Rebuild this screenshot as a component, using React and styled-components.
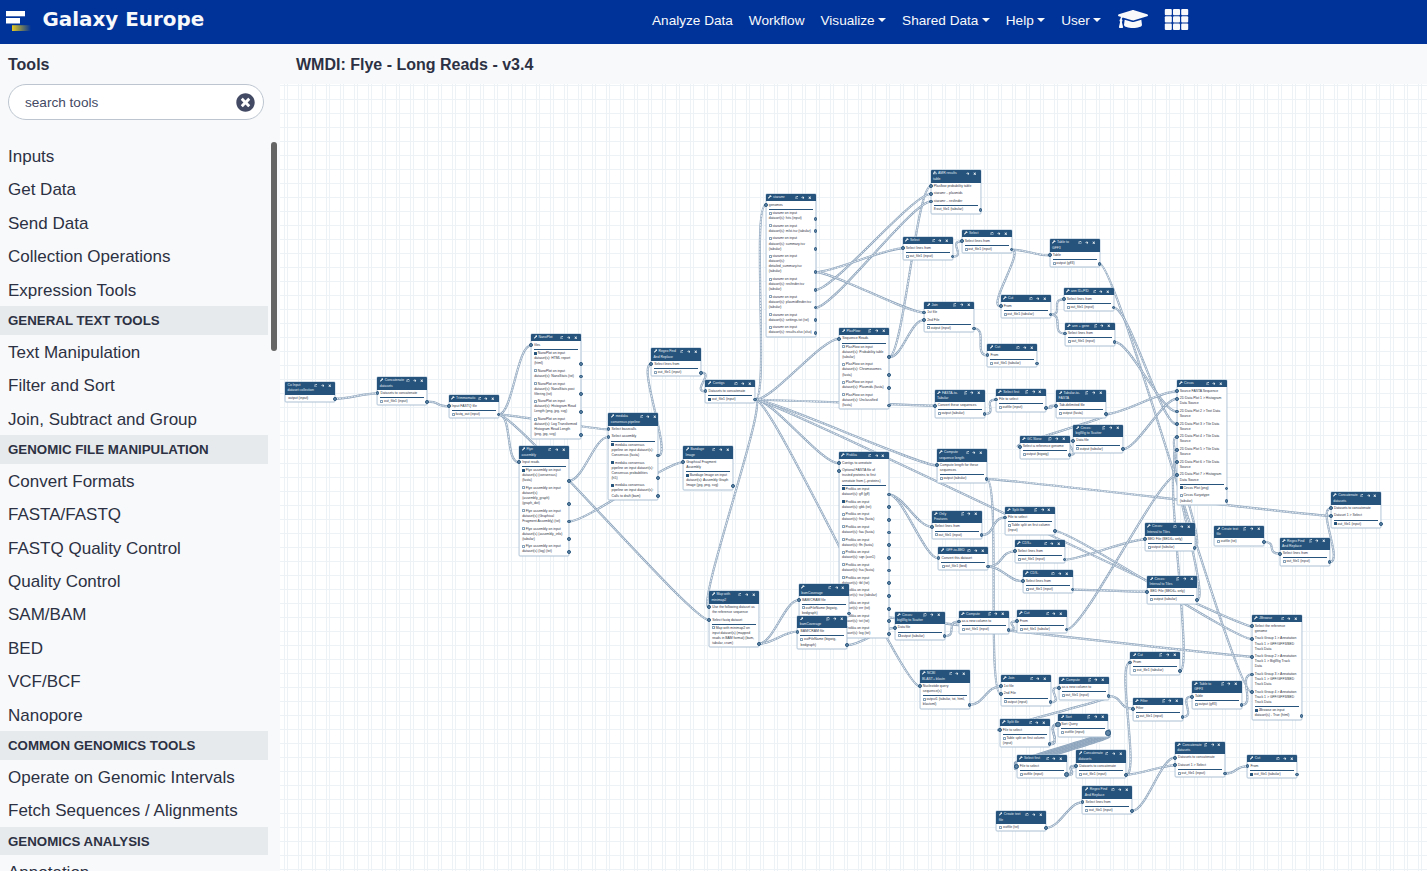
import React from "react";
import styled, { createGlobalStyle, css } from "styled-components";
import {
  FaWrench,
  FaSitemap,
  FaRegCopy,
  FaArrowRight,
  FaTimes,
  FaTimesCircle,
  FaGraduationCap,
} from "react-icons/fa";

const Global = createGlobalStyle`
  * { box-sizing: border-box; }
  body { margin: 0; font-family: "Liberation Sans", Arial, sans-serif; color: #2c3143; background: #f8f9fa; }
`;

const Page = styled.div`
  display: flex;
  flex-direction: column;
  width: 1427px;
  height: 871px;
  overflow: hidden;
  background: #f8f9fb;
`;

/* ---------- masthead ---------- */
const Masthead = styled.header`
  display: flex;
  flex: 0 0 44px;
  background: #003399;
  color: #f8f9fb;
`;
const Brand = styled.div`
  display: flex;
  width: 644px;
  height: 42px;
  align-items: center;
  padding-left: 5px;
  gap: 10.5px;
`;
const BrandName = styled.span`
  margin-top: -2px;
  font: bold 19.9px/24px "DejaVu Sans", Verdana, sans-serif;
`;
const Nav = styled.nav`
  display: flex;
  height: 40px;
  align-items: center;
`;
const NavItem = styled.a`
  display: flex;
  align-items: center;
  padding: 0 8px;
  font-size: 13.6px;
  white-space: nowrap;
`;
const NavIcon = styled(NavItem)`
  height: 38.5px;
  margin-left: 0.6px;
  align-self: flex-start;
`;
const Caret = styled.i`
  margin-left: 3.4px;
  border: 4px solid transparent;
  border-top-color: currentColor;
  border-bottom: 0;
`;

/* ---------- tool panel ---------- */
const Body = styled.div`
  display: flex;
  flex: 1;
  min-height: 0;
`;
const Side = styled.aside`
  display: flex;
  flex-direction: column;
  width: 280px;
`;
const SideTitle = styled.h2`
  height: 40px;
  margin: 0;
  padding: 0 8px;
  font-size: 16px;
  line-height: 42px;
`;
const Search = styled.div`
  display: flex;
  align-items: center;
  justify-content: space-between;
  width: 256px;
  height: 36px;
  margin-left: 8px;
  padding: 0 8px 0 16px;
  border: 1px solid #bdc6d0;
  border-radius: 18px;
  background: #fff;
  color: #434a64;
  font-size: 13.6px;
`;
const ToolScroll = styled.div`
  display: flex;
  flex: 1;
  min-height: 0;
  margin-top: 19px;
  overflow: hidden;
`;
const ToolList = styled.div`
  flex: 0 0 268px;
`;
const ToolLink = styled.div`
  height: 33.45px;
  padding-left: 8px;
  font-size: 17px;
  line-height: 35px;
`;
const ToolSection = styled.div`
  height: 28.6px;
  padding-left: 8px;
  background: #e7eaed;
  font-size: 13.3px;
  font-weight: bold;
  line-height: 29px;
`;
const Thumb = styled.div`
  width: 6px;
  height: 209px;
  margin: 3px 0 0 3px;
  border-radius: 3px;
  background: #646464;
`;

/* ---------- workflow canvas ---------- */
const Main = styled.main`
  flex: 1;
  display: flex;
  flex-direction: column;
  min-width: 0;
`;
const FlowTitle = styled.h1`
  height: 40px;
  margin: 0;
  padding-left: 16px;
  font-size: 16px;
  line-height: 42px;
`;
const Canvas = styled.div`
  position: relative;
  flex: 1;
  overflow: hidden;
  background-color: #fff;
  background-image: linear-gradient(#edf2f7 1px, transparent 1px),
    linear-gradient(90deg, #edf2f7 1px, transparent 1px),
    linear-gradient(90deg, #edf2f7 1px, transparent 1px);
  background-size: 14px 14px;
  background-position: 0 1px, 4px 0, 7px 0;
`;
const Wires = styled.svg`
  position: absolute;
  inset: 0;
`;
const NodeCard = styled.section`
  position: absolute;
  left: ${(p) => p.$x - 280}px;
  top: ${(p) => p.$y - 83.8}px;
  width: 50px;
  background: #fff;
  border-radius: 1px;
  box-shadow: 0 0 0 0.4px #a9bfd3, inset 0 0 0 0.5px #a9bfd3;
  font-size: 3.42px;
  line-height: 5.1px;
  white-space: nowrap;
`;
const NodeHead = styled.header`
  display: flex;
  height: ${(p) => p.$h}px;
  padding: 1.2px 0 0 2.5px;
  border-radius: 1px 1px 0 0;
  background: #25537b;
  color: #e6edf4;
`;
const HeadText = styled.div`
  flex: 0 0 26.6px;
  svg { width: 3.6px; height: 3.6px; margin-right: 1.4px; vertical-align: -0.3px; color: #fff; }
`;
const HeadTools = styled.div`
  display: flex;
  gap: 3.4px;
  height: 4.2px;
  width: 17.1px;
  justify-content: flex-end;
  align-items: center;
  color: #fff;
  svg { width: 3.5px; height: 3.5px; flex: none; }
`;
const Row = styled.div`
  position: relative;
  padding: 1.25px 0 1.25px 3.2px;
`;
const Outputs = styled.div`
  position: relative;
  padding-top: 0.3px;
`;
const Rule = styled.div`
  height: 1px;
  margin: 0 3px -0.6px;
  background: #25537b;
`;
const Check = styled.i`
  display: inline-block;
  width: 3px;
  height: 3px;
  margin-right: 0.6px;
  border: 1px solid #86a1ba;
  border-radius: 0.5px;
  vertical-align: -0.5px;
  ${(p) => p.$on && css`background: #25537b; border-color: #25537b;`}
`;
const Terminal = styled.i`
  position: absolute;
  width: ${(p) => (p.$big ? 5.4 : 3.8)}px;
  height: ${(p) => (p.$big ? 5.4 : 3.8)}px;
  border: 1px solid #25537b;
  border-radius: 50%;
  background: #5f83a3;
  ${(p) => (p.$out ? css`right: ${p.$big ? -2.7 : -1.8}px; bottom: ${p.$big ? 1.1 : 1.9}px;` : css`left: ${p.$big ? -2.7 : -1.8}px; top: ${p.$big ? 1.1 : 1.9}px;`)}
`;

const LINE = 5.1;
const PAD = 2.5;

/* lines of a row are split by "|"; outputs start with "+" (checked), "-" (unchecked) or "." (no box) */
const NODES = {
  co: [285, 382, "Co Input|dataset collection", [], [".output (input)"], "none"],
  conc: [377.3, 377, "Concatenate|datasets", ["Datasets to concatenate"], ["-out_file1 (input)"]],
  trim: [448.6, 395, "Trimmomatic", ["Input FASTQ file"], ["-fastq_out (input)"]],
  nano: [531, 334, "NanoPlot", ["files"], [
    "+NanoPlot on input|dataset(s): HTML report|(html)",
    "-NanoPlot on input|dataset(s): NanoStats (txt)",
    "-NanoPlot on input|dataset(s): NanoStats post|filtering (txt)",
    "-NanoPlot on input|dataset(s): Histogram Read|Length (png, jpg, svg)",
    "-NanoPlot on input|dataset(s): Log Transformed|Histogram Read Length|(png, jpg, svg)"]],
  flye: [519, 446, "Flye|assembly", ["Input reads"], [
    "+Flye assembly on input|dataset(s) (consensus)|(fasta)",
    "-Flye assembly on input|dataset(s)|(assembly_graph)|(graph_dot)",
    "-Flye assembly on input|dataset(s) (Graphical|Fragment Assembly) (txt)",
    "-Flye assembly on input|dataset(s) (assembly_info)|(tabular)",
    "-Flye assembly on input|dataset(s) (log) (txt)"]],
  medaka: [608.3, 413, "medaka|consensus pipeline", ["Select basecalls", "Select assembly"], [
    "+medaka consensus|pipeline on input dataset(s):|Consensus (fasta)",
    "+medaka consensus|pipeline on input dataset(s):|Consensus probabilities|(h5)",
    "+medaka consensus|pipeline on input dataset(s):|Calls to draft (bam)"]],
  regex: [651, 348, "Regex Find|And Replace", ["Select lines from"], ["-out_file1 (input)"]],
  contigs: [705.3, 380, "Contigs", ["Datasets to concatenate"], ["+out_file1 (input)"]],
  bandage: [683, 446, "Bandage|Image", ["Graphical Fragment|Assembly"], [
    "+Bandage Image on input|dataset(s): Assembly Graph|Image (jpg, png, svg)"]],
  staramr: [765.6, 194, "staramr", ["genomes"], [
    "-staramr on input|dataset(s): hits (input)",
    "-staramr on input|dataset(s): mlst.tsv (tabular)",
    "-staramr on input|dataset(s): summary.tsv|(tabular)",
    "-staramr on input|dataset(s):|detailed_summary.tsv|(tabular)",
    "-staramr on input|dataset(s): resfinder.tsv|(tabular)",
    "-staramr on input|dataset(s): plasmidfinder.tsv|(tabular)",
    "-staramr on input|dataset(s): settings.txt (txt)",
    "-staramr on input|dataset(s): results.xlsx (xlsx)"]],
  plas: [839, 327.5, "PlasFlow", ["Sequence Reads"], [
    "-PlasFlow on input|dataset(s): Probability table|(tabular)",
    "-PlasFlow on input|dataset(s): Chromosomes|(fasta)",
    "-PlasFlow on input|dataset(s): Plasmids (fasta)",
    "-PlasFlow on input|dataset(s): Unclassified|(fasta)"]],
  amr: [930.6, 170, "AMR results|table", ["Plasflow probability table", "staramr .. plasmids", "staramr .. resfinder"], [".8:out_file1 (tabular)"], "flow"],
  sel1: [902.6, 237, "Select", ["Select lines from"], ["-out_file1 (input)"]],
  sel2: [961.5, 230, "Select", ["Select lines from"], ["-out_file1 (input)"]],
  join1: [924, 301.3, "Join", ["1st file", "2nd File"], ["-output (input)"]],
  gff1: [1049.5, 239, "Table to|GFF3", ["Table"], ["-output (gff3)"]],
  cut1: [1000.5, 295, "Cut", ["From"], ["-out_file1 (tabular)"]],
  cut2: [987.3, 344, "Cut", ["From"], ["-out_file1 (tabular)"]],
  ann1: [1063.6, 288, "ann ID+PID", ["Select lines from"], ["-out_file1 (input)"]],
  ann2: [1064.6, 322.3, "ann + gene", ["Select lines from"], ["-out_file1 (input)"]],
  f2t: [934.6, 389.3, "FASTA-to-|Tabular", ["Convert these sequences"], ["-output (tabular)"]],
  first1: [995.8, 388.3, "Select first", ["File to select"], ["-outfile (input)"]],
  t2f: [1056, 389.3, "Tabular-to-|FASTA", ["Tab-delimited file"], ["-output (fasta)"]],
  skew: [1019.5, 435.4, "GC Skew", ["Select a reference genome"], ["-output (bigwig)"]],
  scat1: [1073, 424.4, "Circos:|bigWig to Scatter", ["Data file"], ["-output (tabular)"]],
  len: [936.6, 449, "Compute|sequence length", ["Compute length for these|sequences"], ["-output (tabular)"]],
  prokka: [838.8, 452, "Prokka", ["Contigs to annotate", "Optional FASTA file of|trusted proteins to first|annotate from (--proteins)"], [
    "+Prokka on input|dataset(s): gff (gff)",
    "+Prokka on input|dataset(s): gbk (txt)",
    "-Prokka on input|dataset(s): fna (fasta)",
    "-Prokka on input|dataset(s): faa (fasta)",
    "-Prokka on input|dataset(s): ffn (fasta)",
    "-Prokka on input|dataset(s): sqn (asn1)",
    "-Prokka on input|dataset(s): fsa (fasta)",
    "-Prokka on input|dataset(s): tbl (txt)",
    "-Prokka on input|dataset(s): tsv (tabular)",
    "-Prokka on input|dataset(s): err (txt)",
    "-Prokka on input|dataset(s): txt (txt)",
    "-Prokka on input|dataset(s): log (txt)"]],
  only: [931.6, 510.4, "Only|Features", ["Select lines from"], ["-out_file1 (input)"]],
  bed: [938.4, 547, "GFF-to-BED", ["Convert this dataset"], ["-out_file1 (bed)"]],
  split1: [1004.8, 506.3, "Split file", ["File to select"], ["-Table split on first column|(input)"]],
  cdsp: [1014.6, 540, "CDS+", ["Select lines from"], ["-out_file1 (input)"]],
  cdsm: [1022.5, 570, "CDS-", ["Select lines from"], ["-out_file1 (input)"]],
  scat2: [894.5, 611.4, "Circos:|bigWig to Scatter", ["Data file"], ["-output (tabular)"]],
  comp1: [958.6, 610.3, "Compute", ["as a new column to"], ["-out_file1 (input)"]],
  cut3: [1016.6, 610, "Cut", ["From"], ["-out_file1 (tabular)"]],
  blast: [919.6, 670, "NCBI|BLAST+ blastn", ["Nucleotide query|sequence(s)"], ["-output1 (tabular, txt, html,|blastxml)"]],
  join2: [1000.6, 675, "Join", ["1st file", "2nd File"], ["-output (input)"]],
  comp2: [1058.6, 676.4, "Compute", ["as a new column to"], ["-out_file1 (input)"]],
  split2: [999.6, 719, "Split file", ["File to select"], ["-Table split on first column|(input)"]],
  sort: [1058, 713.4, "Sort", ["Sort Query"], ["-outfile (input)"], "wrench", true],
  first2: [1016.6, 755, "Select first", ["File to select"], ["-outfile (input)"], "wrench", true],
  conc2: [1076, 750, "Concatenate|datasets", ["Datasets to concatenate"], ["-out_file1 (input)"]],
  regex2: [1082.3, 786, "Regex Find|And Replace", ["Select lines from"], ["-out_file1 (input)"]],
  text1: [996.3, 811, "Create text|file", [], ["-outfile (txt)"]],
  cut4: [1130, 651.3, "Cut", ["From"], ["-out_file1 (tabular)"]],
  filter: [1132.7, 697.4, "Filter", ["Filter"], ["-out_file1 (input)"]],
  gff2: [1191.7, 680.3, "Table to|GFF3", ["Table"], ["-output (gff3)"]],
  conc3: [1174.8, 741.3, "Concatenate|datasets", ["Datasets to concatenate", "Dataset 1 > Select"], ["-out_file1 (input)"]],
  cut5: [1247.3, 755, "Cut", ["From"], ["+out_file1 (tabular)"]],
  jb: [1251.6, 615, "JBrowse", ["Select the reference|genome",
    "Track Group 1 > Annotation|Track 1 > GFF/GFF3/BED|Track Data",
    "Track Group 2 > Annotation|Track 1 > BigWig Track|Data",
    "Track Group 3 > Annotation|Track 1 > GFF/GFF3/BED|Track Data",
    "Track Group 4 > Annotation|Track 1 > GFF/GFF3/BED|Track Data"], ["+JBrowse on input|dataset(s) - True (html)"]],
  circos: [1176.6, 380, "Circos", ["Source FASTA Sequence",
    "2D Data Plot 1 > Histogram|Data Source",
    "2D Data Plot 2 > Text Data|Source",
    "2D Data Plot 3 > Tile Data|Source",
    "2D Data Plot 4 > Tile Data|Source",
    "2D Data Plot 5 > Tile Data|Source",
    "2D Data Plot 6 > Tile Data|Source",
    "2D Data Plot 7 > Histogram|Data Source"], ["+Circos Plot (png)", "-Circos Karyotype|(tabular)"]],
  tile1: [1144.5, 523, "Circos:|Interval to Tiles", ["BED File (BED6+ only)"], ["-output (tabular)"]],
  tile2: [1147, 575.3, "Circos:|Interval to Tiles", ["BED File (BED6+ only)"], ["-output (tabular)"]],
  text2: [1214, 525.3, "Create text|file", [], ["-outfile (txt)"]],
  regex3: [1279.6, 537.3, "Regex Find|And Replace", ["Select lines from"], ["-out_file1 (input)"]],
  conc4: [1330.8, 492, "Concatenate|datasets", ["Datasets to concatenate", "Dataset 1 > Select"], ["+out_file1 (input)"]],
  map: [709, 591, "Map with|minimap2", ["Use the following dataset as|the reference sequence", "Select fastq dataset"], [
    "-Map with minimap2 on|input dataset(s) (mapped|reads in BAM format) (bam,|tabular, cram)"]],
  cov1: [798.8, 583.8, "|bamCoverage", ["BAM/CRAM file"], ["-outFileName (bigwig,|bedgraph)"]],
  cov2: [797.3, 615.3, "|bamCoverage", ["BAM/CRAM file"], ["-outFileName (bigwig,|bedgraph)"]],
};

/* source, output index, target, input index, strand count */
const LINKS = [
  ["co", 0, "conc", 0], ["conc", 0, "trim", 0], ["trim", 0, "nano", 0], ["trim", 0, "flye", 0],
  ["trim", 0, "medaka", 0], ["trim", 0, "map", 1], ["flye", 0, "medaka", 1], ["flye", 2, "bandage", 0],
  ["medaka", 0, "regex", 0], ["regex", 0, "contigs", 0], ["contigs", 0, "staramr", 0],
  ["contigs", 0, "plas", 0], ["contigs", 0, "prokka", 0], ["contigs", 0, "len", 0],
  ["contigs", 0, "jb", 0], ["contigs", 0, "blast", 0], ["contigs", 0, "map", 0], ["contigs", 0, "f2t", 0],
  ["plas", 0, "amr", 0], ["staramr", 5, "amr", 2], ["staramr", 4, "amr", 1],
  ["staramr", 3, "sel1", 0], ["staramr", 3, "join1", 0], ["plas", 0, "join1", 1],
  ["sel1", 0, "sel2", 0], ["sel2", 0, "gff1", 0], ["sel2", 0, "cut1", 0], ["cut1", 0, "ann1", 0],
  ["cut1", 0, "ann2", 0], ["join1", 0, "cut2", 0], ["gff1", 0, "jb", 4], ["ann1", 0, "circos", 3],
  ["ann2", 0, "circos", 2], ["f2t", 0, "first1", 0], ["first1", 0, "t2f", 0], ["t2f", 0, "circos", 0],
  ["t2f", 0, "skew", 0], ["skew", 0, "scat1", 0], ["scat1", 0, "circos", 1], ["len", 0, "join2", 1],
  ["len", 0, "conc4", 1], ["prokka", 0, "only", 0], ["prokka", 0, "bed", 0], ["only", 0, "split1", 0],
  ["split1", 0, "jb", 1], ["bed", 0, "cdsp", 0], ["bed", 0, "cdsm", 0], ["cdsp", 0, "tile1", 0],
  ["cdsm", 0, "tile2", 0], ["tile1", 0, "circos", 4], ["tile2", 0, "circos", 5], ["cut4", 0, "circos", 6],
  ["cut3", 0, "circos", 7], ["cov2", 0, "scat2", 0], ["cov1", 0, "jb", 2], ["scat2", 0, "comp1", 0],
  ["comp1", 0, "cut3", 0], ["blast", 0, "join2", 0], ["join2", 0, "comp2", 0], ["comp2", 0, "split2", 0],
  ["comp2", 0, "filter", 0], ["split2", 0, "sort", 0, 2], ["sort", 0, "first2", 0, 5],
  ["first2", 0, "conc2", 0, 2], ["conc2", 0, "cut4", 0], ["conc2", 0, "conc3", 1], ["regex2", 0, "conc3", 0],
  ["text1", 0, "regex2", 0], ["filter", 0, "gff2", 0], ["gff2", 0, "jb", 3], ["conc3", 0, "cut5", 0],
  ["map", 0, "cov1", 0], ["map", 0, "cov2", 0], ["text2", 0, "regex3", 0], ["regex3", 0, "conc4", 0],
];

const countLines = (s) => s.split("|").length;
const headHeight = (title) => 2.2 + LINE * countLines(title);
const rowHeight = (s) => PAD + LINE * countLines(s);

function anchor(id, index, isOutput) {
  const [x, y, title, inputs, outputs] = NODES[id];
  let top = y + headHeight(title) - 83.8;
  if (!isOutput) {
    for (let i = 0; i < index; i++) top += rowHeight(inputs[i]);
    return [x - 280, top + 3.8];
  }
  inputs.forEach((r) => (top += rowHeight(r)));
  top += inputs.length ? 0.7 : 0.3;
  for (let i = 0; i <= index; i++) top += rowHeight(outputs[i]);
  return [x + 50 - 280, top - 3.8];
}

function wirePath([from, o, to, i], shift) {
  const [x0, y0] = anchor(from, o, true);
  const [x1, y1] = anchor(to, i, false);
  const c = Math.min(18, Math.max(14, Math.abs(x1 - x0) / 4));
  return `M${x0} ${y0 + shift}C${x0 + c} ${y0 + shift} ${x1 - c} ${y1 + shift} ${x1} ${y1 + shift}`;
}

function Wire({ link }) {
  const n = link[4] || 1;
  return Array.from({ length: n }, (_, k) => {
    const d = wirePath(link, (k - (n - 1) / 2) * 1.4);
    return (
      <g key={k} fill="none">
        <path d={d} stroke="#8ba3bb" strokeWidth="2.2" />
        <path d={d} stroke={n > 2 ? "#a5b8ca" : "#f0f4f8"} strokeWidth="0.9" />
        <path d={d} stroke="#8ba3bb" strokeWidth="0.9" strokeDasharray="1 2" />
      </g>
    );
  });
}

const Lines = ({ text }) =>
  text.split("|").map((t, i) => (
    <React.Fragment key={i}>
      {i > 0 && <br />}
      {t}
    </React.Fragment>
  ));

function FlowNode({ node }) {
  const [x, y, title, inputs, outputs, icon = "wrench", big] = node;
  return (
    <NodeCard $x={x} $y={y}>
      <NodeHead $h={headHeight(title)}>
        <HeadText>
          {icon === "wrench" && <FaWrench />}
          {icon === "flow" && <FaSitemap />}
          <Lines text={title} />
        </HeadText>
        <HeadTools>
          {icon !== "flow" && <FaRegCopy />}
          <FaArrowRight />
          <FaTimes />
        </HeadTools>
      </NodeHead>
      {inputs.map((r) => (
        <Row key={r}>
          <Terminal $big={big} />
          <Lines text={r} />
        </Row>
      ))}
      {inputs.length > 0 && <Rule />}
      <Outputs>
        {outputs.map((r) => (
          <Row key={r}>
            {r[0] !== "." && <Check $on={r[0] === "+"} />}
            <Lines text={r.slice(1)} />
            <Terminal $out $big={big} />
          </Row>
        ))}
      </Outputs>
    </NodeCard>
  );
}

const TOOLS = [
  "Inputs", "Get Data", "Send Data", "Collection Operations", "Expression Tools",
  "#GENERAL TEXT TOOLS", "Text Manipulation", "Filter and Sort", "Join, Subtract and Group",
  "#GENOMIC FILE MANIPULATION", "Convert Formats", "FASTA/FASTQ", "FASTQ Quality Control",
  "Quality Control", "SAM/BAM", "BED", "VCF/BCF", "Nanopore",
  "#COMMON GENOMICS TOOLS", "Operate on Genomic Intervals", "Fetch Sequences / Alignments",
  "#GENOMICS ANALYSIS", "Annotation",
];

const MENU = [["Analyze Data"], ["Workflow"], ["Visualize", 1], ["Shared Data", 1], ["Help", 1], ["User", 1]];

const Logo = () => (
  <svg width="27" height="22" viewBox="0 0 27 22">
    <defs>
      <linearGradient id="fade">
        <stop offset="0" stopColor="#e6c81e" />
        <stop offset="1" stopColor="#e6c81e" stopOpacity="0" />
      </linearGradient>
    </defs>
    <rect x="1" y="1" width="19" height="5.3" fill="#fff" />
    <rect x="1" y="8" width="14" height="5.5" fill="#fff" />
    <rect x="7" y="15.2" width="19" height="5.8" fill="url(#fade)" />
  </svg>
);

const GridIcon = () => (
  <svg width="25" height="21" viewBox="0 0 25 21" fill="currentColor">
    {[0, 7.3, 14.6].map((y) =>
      [0.8, 9, 17.2].map((x) => <rect key={x + "-" + y} x={x} y={y} width="7" height="6.3" rx="1" />)
    )}
  </svg>
);

export default function App() {
  return (
    <Page>
      <Global />
      <Masthead>
        <Brand>
          <Logo />
          <BrandName>Galaxy Europe</BrandName>
        </Brand>
        <Nav>
          {MENU.map(([label, drop]) => (
            <NavItem key={label}>
              {label}
              {drop && <Caret />}
            </NavItem>
          ))}
          <NavIcon><FaGraduationCap size={30} /></NavIcon>
          <NavIcon><GridIcon /></NavIcon>
        </Nav>
      </Masthead>
      <Body>
        <Side>
          <SideTitle>Tools</SideTitle>
          <Search>
            search tools
            <FaTimesCircle size={19} />
          </Search>
          <ToolScroll>
            <ToolList>
              {TOOLS.map((t) =>
                t[0] === "#" ? <ToolSection key={t}>{t.slice(1)}</ToolSection> : <ToolLink key={t}>{t}</ToolLink>
              )}
            </ToolList>
            <Thumb />
          </ToolScroll>
        </Side>
        <Main>
          <FlowTitle>WMDI: Flye - Long Reads - v3.4</FlowTitle>
          <Canvas>
            <Wires width="1147" height="787">
              {LINKS.map((l, i) => <Wire key={i} link={l} />)}
            </Wires>
            {Object.entries(NODES).map(([id, n]) => <FlowNode key={id} node={n} />)}
          </Canvas>
        </Main>
      </Body>
    </Page>
  );
}
